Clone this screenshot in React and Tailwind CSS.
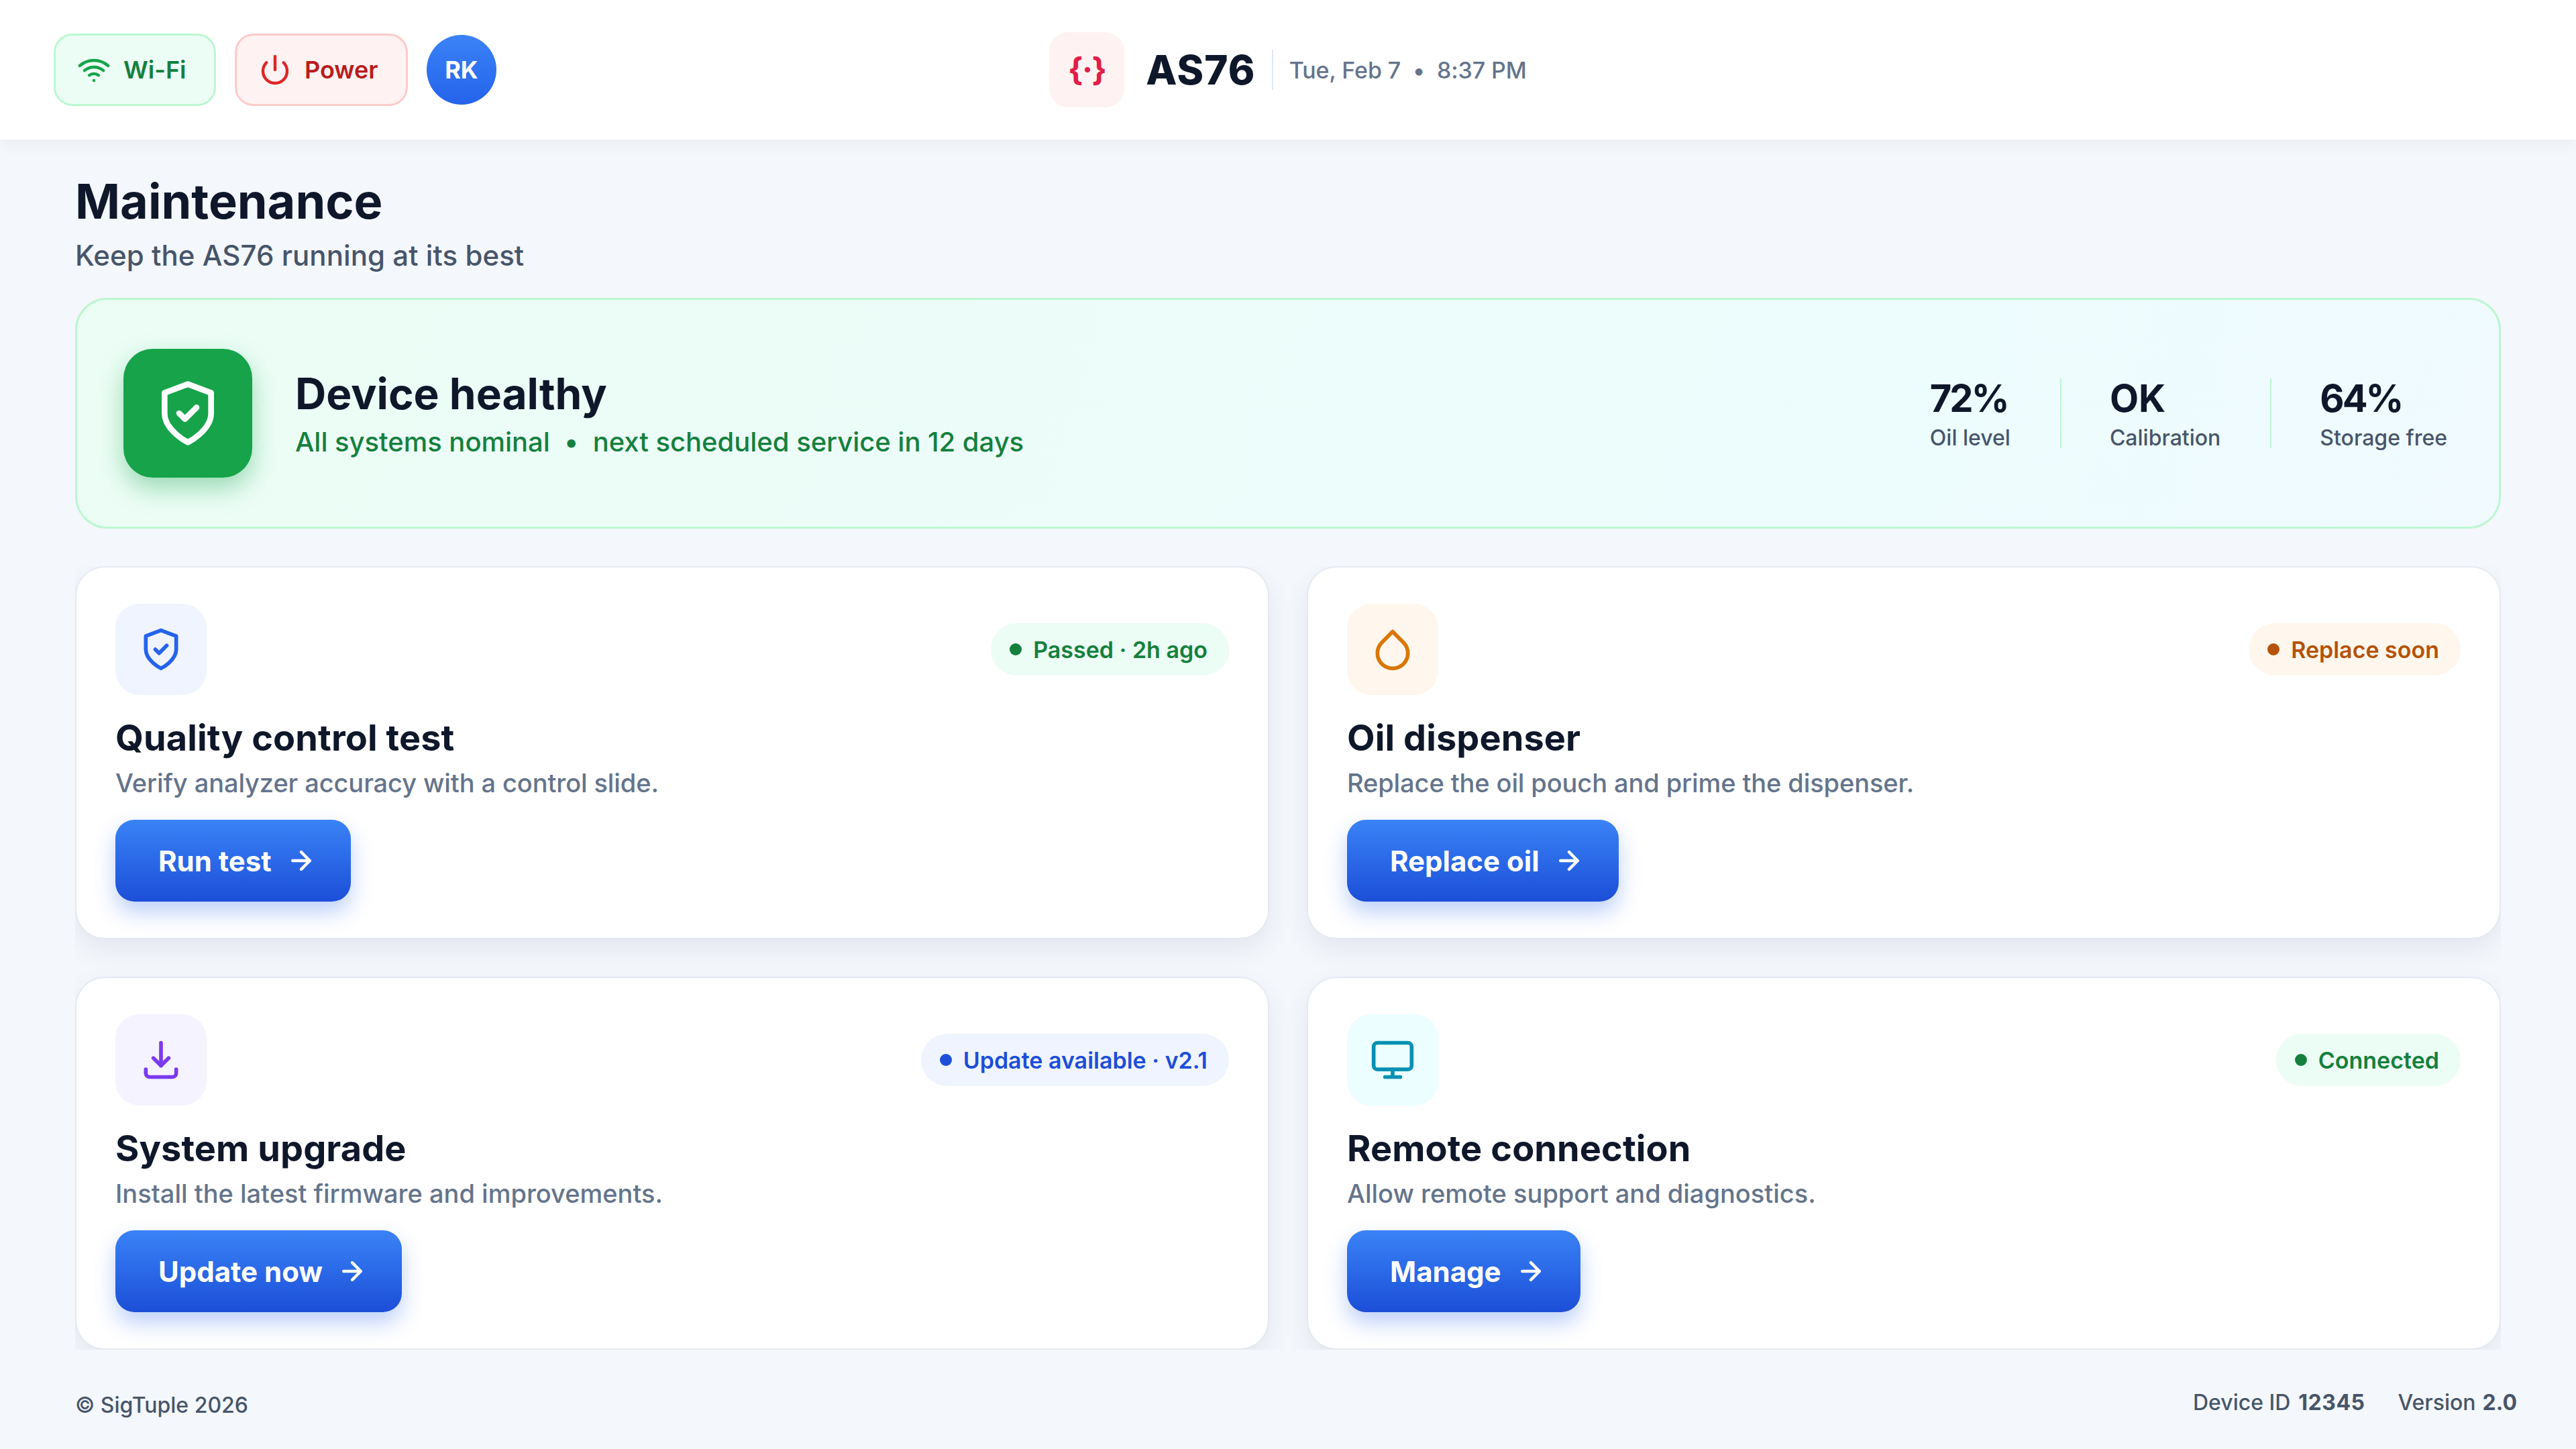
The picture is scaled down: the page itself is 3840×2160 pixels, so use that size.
import React from 'react';
import clsx from 'clsx';

const Icon = ({ size = 48, strokeWidth = 2, className, children }) => (
  <svg
    width={size}
    height={size}
    viewBox="0 0 24 24"
    fill="none"
    stroke="currentColor"
    strokeWidth={strokeWidth}
    strokeLinecap="round"
    strokeLinejoin="round"
    className={clsx('shrink-0', className)}
  >
    {children}
  </svg>
);

const WifiIcon = (props) => (
  <Icon {...props}>
    <path d="M5 12.55a11 11 0 0 1 14.08 0" />
    <path d="M1.42 9a16 16 0 0 1 21.16 0" />
    <path d="M8.53 16.11a6 6 0 0 1 6.95 0" />
    <path d="M12 20h.01" />
  </Icon>
);

const PowerIcon = (props) => (
  <Icon {...props}>
    <path d="M18.36 6.64a9 9 0 1 1-12.73 0" />
    <path d="M12 2v10" />
  </Icon>
);

const ShieldIcon = (props) => (
  <Icon {...props}>
    <path d="M12 22s8-4 8-10V5l-8-3-8 3v7c0 6 8 10 8 10z" />
    <path d="M9 12l2 2 4-4" />
  </Icon>
);

const DropIcon = (props) => (
  <Icon {...props}>
    <path d="M12 2.69l5.66 5.66a8 8 0 1 1-11.31 0z" />
  </Icon>
);

const DownloadIcon = (props) => (
  <Icon {...props}>
    <path d="M12 3v12" />
    <path d="M8 11l4 4 4-4" />
    <path d="M4 17v2a2 2 0 0 0 2 2h12a2 2 0 0 0 2-2v-2" />
  </Icon>
);

const MonitorIcon = (props) => (
  <Icon {...props}>
    <rect x="2" y="3" width="20" height="14" rx="2" />
    <path d="M8 21h8M12 17v4" />
  </Icon>
);

const ArrowIcon = (props) => (
  <Icon {...props}>
    <path d="M5 12h14M12 5l7 7-7 7" />
  </Icon>
);

const STATS = [
  { value: '72%', label: 'Oil level', tracking: 'tracking-[-3px]' },
  { value: 'OK', label: 'Calibration', tracking: 'tracking-normal' },
  { value: '64%', label: 'Storage free', tracking: 'tracking-[-3px]' },
];

const CARDS = [
  {
    title: 'Quality control test',
    text: 'Verify analyzer accuracy with a control slide.',
    textStyle: 'tracking-[-0.1px]',
    action: 'Run test',
    icon: ShieldIcon,
    tile: 'bg-[#eff4ff] text-[#2563eb]',
    tag: 'Passed · 2h ago',
    tagStyle: 'bg-[#ecfdf5] text-[#15803d]',
  },
  {
    title: 'Oil dispenser',
    text: 'Replace the oil pouch and prime the dispenser.',
    textStyle: 'tracking-[-0.1px]',
    action: 'Replace oil',
    icon: DropIcon,
    tile: 'bg-[#fff7ed] text-[#d97706]',
    tag: 'Replace soon',
    tagStyle: 'bg-[#fff7ed] text-[#b45309]',
  },
  {
    title: 'System upgrade',
    text: 'Install the latest firmware and improvements.',
    action: 'Update now',
    icon: DownloadIcon,
    tile: 'bg-[#f5f3ff] text-[#7c3aed]',
    tag: 'Update available · v2.1',
    tagStyle: 'bg-[#eff4ff] text-[#1d4ed8]',
  },
  {
    title: 'Remote connection',
    text: 'Allow remote support and diagnostics.',
    action: 'Manage',
    icon: MonitorIcon,
    tile: 'bg-[#ecfeff] text-[#0891b2]',
    tag: 'Connected',
    tagStyle: 'bg-[#ecfdf5] text-[#15803d]',
  },
];

const Header = () => (
  <header className="relative z-10 grid h-[208px] shrink-0 grid-cols-[1fr_auto_1fr] items-center bg-white px-20 shadow-[0_4px_24px_rgba(15,23,42,0.06)]">
    <div className="flex items-center gap-7">
      <button className="flex h-[108px] w-[242px] items-center gap-5 rounded-[28px] border-[3px] border-[#bbf7d0] bg-[#ecfdf5] pl-[33px] text-[36px] font-semibold text-[#15803d]">
        <WifiIcon strokeWidth={2.2} className="text-[#16a34a]" />
        Wi-Fi
      </button>
      <button className="flex h-[108px] w-[258px] items-center gap-5 rounded-[28px] border-[3px] border-[#fecaca] bg-[#fef2f2] pl-[33px] text-[36px] font-semibold text-[#b91c1c]">
        <PowerIcon strokeWidth={2.2} className="text-[#dc2626]" />
        Power
      </button>
      <div className="flex size-[104px] items-center justify-center rounded-full bg-linear-to-b from-[#3b82f6] to-[#2563eb] text-[36px] font-bold text-white">
        RK
      </div>
    </div>

    <div className="flex items-center">
      <div className="flex size-28 items-center justify-center rounded-[28px] bg-[#fef2f2] text-[48px] font-bold tracking-[-1.5px] text-[#e11d48]">
        {'{·}'}
      </div>
      <span className="ml-8 text-[60px] font-extrabold tracking-[0.02em] text-[#0f172a]">AS76</span>
      <div className="ml-6 h-[60px] w-0.5 bg-[#e2e8f0]" />
      <span className="ml-6 text-[34px] font-medium tracking-[-0.1px] whitespace-pre text-[#64748b]">
        {'Tue, Feb 7  •  8:37 PM'}
      </span>
    </div>
  </header>
);

const HealthBanner = () => (
  <section className="mt-[33px] flex h-[344px] items-center rounded-[48px] border-[3px] border-[#bbf7d0] bg-[linear-gradient(110deg,#ecfdf5,#ecfdfc_65%,#f0faff)] pr-[77px] pl-[69px]">
    <div className="flex size-48 items-center justify-center rounded-[44px] bg-[#16a34a] text-white shadow-[0_16px_36px_rgba(22,163,74,0.38)]">
      <ShieldIcon size={104} />
    </div>
    <div className="ml-16">
      <h2 className="text-[64px] leading-[76px] font-bold text-[#0f172a]">Device healthy</h2>
      <p className="mt-2.5 text-[40px] leading-[48px] font-medium tracking-[-0.03px] whitespace-pre text-[#15803d]">
        {'All systems nominal  •  next scheduled service in 12 days'}
      </p>
    </div>
    <div className="ml-auto flex divide-x-2 divide-[#bbf7d0]">
      {STATS.map((stat) => (
        <div key={stat.label} className="h-[104px] pr-[74px] pl-[72px] first:pl-0 last:pr-0">
          <div className={clsx('text-[56px] leading-[60px] font-bold text-[#0f172a]', stat.tracking)}>{stat.value}</div>
          <div className="mt-[13px] text-[32px] leading-8 font-medium text-[#475569]">{stat.label}</div>
        </div>
      ))}
    </div>
  </section>
);

const Card = ({ title, text, textStyle, action, icon: TileIcon, tile, tag, tagStyle }) => (
  <article className="flex h-[556px] flex-col items-start rounded-[44px] border-2 border-[#e5e9f1] bg-white px-[58px] pt-[54px] shadow-[0_16px_40px_rgba(15,23,42,0.07)]">
    <div className="flex w-full items-center justify-between">
      <div className={clsx('flex size-[136px] items-center justify-center rounded-[36px]', tile)}>
        <TileIcon size={68} />
      </div>
      <span className={clsx('flex h-[78px] items-center gap-[17px] rounded-full pr-8 pl-7 text-[34px] font-semibold', tagStyle)}>
        <i className="size-[18px] rounded-full bg-current" />
        {tag}
      </span>
    </div>
    <h3 className="mt-8 text-[54px] leading-16 font-bold tracking-[0.1px] text-[#0f172a]">{title}</h3>
    <p className={clsx('mt-[11px] text-[38px] leading-[48px] font-medium text-[#64748b]', textStyle)}>{text}</p>
    <button className="mt-[31px] flex h-[122px] items-center gap-[22px] rounded-[28px] bg-linear-to-b from-[#3b82f6] to-[#1d4ed8] pr-[52px] pl-16 text-[42px] font-bold text-white shadow-[0_16px_32px_rgba(37,99,235,0.3)]">
      {action}
      <ArrowIcon size={44} strokeWidth={2.4} />
    </button>
  </article>
);

const Footer = () => (
  <footer className="flex grow items-start justify-between pr-[88px] pl-28 text-[32px] leading-10 font-medium text-[#475569]">
    <span className="pt-[63px]">© SigTuple 2026</span>
    <div className="flex gap-[49px] pt-[59px]">
      <span>
        Device ID<b className="ml-3 font-bold tracking-[0.5px]">12345</b>
      </span>
      <span>
        Version<b className="ml-2.5 font-bold">2.0</b>
      </span>
    </div>
  </footer>
);

export default function App() {
  return (
    <div className="flex h-[2160px] w-[3840px] flex-col overflow-hidden bg-[#f4f7fc] font-[Inter,sans-serif]">
      <Header />
      <main className="flex shrink-0 flex-col px-28 pt-12">
        <h1 className="text-[72px] leading-[88px] font-bold text-[#0f172a]">Maintenance</h1>
        <p className="mt-[7px] text-[42px] leading-[60px] font-medium tracking-[0.06px] text-[#475569]">
          Keep the AS76 running at its best
        </p>
        <HealthBanner />
        <div className="mt-14 grid grid-cols-2 gap-14 overflow-hidden">
          {CARDS.map((card) => (
            <Card key={card.title} {...card} />
          ))}
        </div>
      </main>
      <Footer />
    </div>
  );
}
